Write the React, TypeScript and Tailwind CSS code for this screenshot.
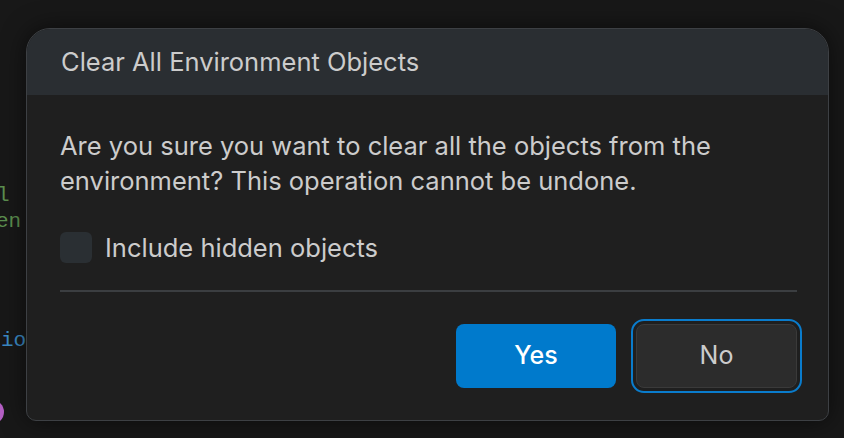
import React from "react";

const CodeBackdrop: React.FC = () => {
  return (
    <div className="h-full w-full font-['Liberation_Mono',monospace] text-[21px] leading-[26px]">
      <div className="h-[183px]" />
      <div className="-ml-[3px] text-[#5c8f4f]">l</div>
      <div className="-ml-[4px] text-[#5c8f4f]">en</div>
      <div className="h-[93px]" />
      <div className="ml-[1px] text-[#3b8ac4]">ior</div>
      <div className="h-[46px]" />
      <div className="-ml-[20px] h-[24px] w-[24px] rounded-full bg-[#b45fc4]" />
    </div>
  );
};

const App: React.FC = () => {
  return (
    <div className="relative h-[438px] w-[844px] overflow-hidden bg-[#181818] font-['Inter',sans-serif]">
      <CodeBackdrop />

      <div className="absolute left-[26px] top-[28px] flex h-[393px] w-[803px] flex-col overflow-hidden rounded-t-[24px] rounded-b-[10px] border border-[#3d4044] bg-[#1f1f1f] shadow-[0_0_24px_rgba(0,0,0,0.55)]">
        <div className="flex h-[66px] shrink-0 items-center bg-[#2a2e32] pl-[34px]">
          <h2 className="text-[25.5px] leading-none text-[#cccccc]">Clear All Environment Objects</h2>
        </div>

        <div className="flex flex-1 flex-col pl-[33px] pr-[31px] pt-[33px]">
          <p className="text-[25.5px] leading-[35px] text-[#cccccc]">
            Are you sure you want to clear all the objects from the
            <br />
            environment? This operation cannot be undone.
          </p>

          <label className="mt-[34px] flex items-center gap-[13px]">
            <span className="h-[31px] w-[32px] rounded-[6px] bg-[#2a2f33]" />
            <span className="text-[25.5px] leading-none text-[#cccccc]">Include hidden objects</span>
          </label>

          <div className="mt-[27px] h-[2px] w-full bg-[#3b3e41]" />

          <div className="mt-[32px] flex justify-end gap-[20px]">
            <button className="h-[64px] w-[160px] rounded-[8px] bg-[#007acc] text-[25px] font-medium text-white">
              Yes
            </button>
            <button className="h-[64px] w-[161px] rounded-[8px] border border-[#3a3a3a] bg-[#2c2c2c] text-[25px] text-[#cccccc] outline-2 outline-offset-[3px] outline-[#0a7ccc]">
              No
            </button>
          </div>
        </div>
      </div>
    </div>
  );
};

export default App;
